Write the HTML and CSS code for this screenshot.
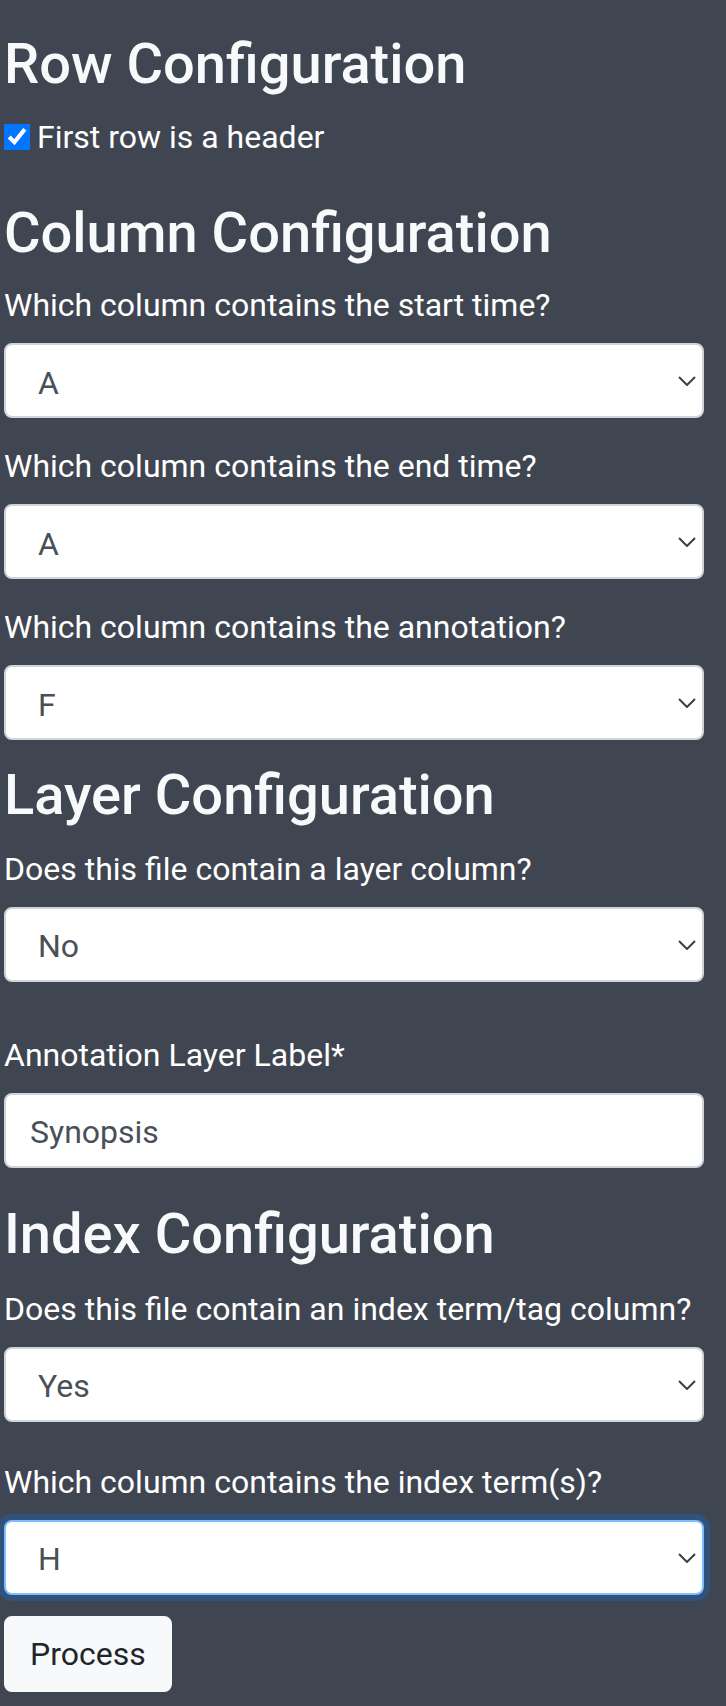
FILE: index.html
```html
<!DOCTYPE html>
<html lang="en">
<head>
<meta charset="utf-8">
<title>Import Configuration</title>
<link rel="stylesheet" href="styles.css">
</head>
<body>
<main class="page">
  <h3 class="section-title section-title--first">Row Configuration</h3>
  <label class="check">
    <input class="check-input" type="checkbox" checked>
    <span>First row is a header</span>
  </label>

  <h3 class="section-title">Column Configuration</h3>
  <div class="field">
    <label class="field-label">Which column contains the start time?</label>
    <div class="select-wrap">
      <select class="select"><option>A</option></select>
      <svg class="chevron" width="18" height="10" viewBox="0 0 18 10"><path d="M1 1 L9 9 L17 1" fill="none" stroke="#3c4043" stroke-width="2"/></svg>
    </div>
  </div>
  <div class="field">
    <label class="field-label">Which column contains the end time?</label>
    <div class="select-wrap">
      <select class="select"><option>A</option></select>
      <svg class="chevron" width="18" height="10" viewBox="0 0 18 10"><path d="M1 1 L9 9 L17 1" fill="none" stroke="#3c4043" stroke-width="2"/></svg>
    </div>
  </div>
  <div class="field field--section-end">
    <label class="field-label">Which column contains the annotation?</label>
    <div class="select-wrap">
      <select class="select"><option>F</option></select>
      <svg class="chevron" width="18" height="10" viewBox="0 0 18 10"><path d="M1 1 L9 9 L17 1" fill="none" stroke="#3c4043" stroke-width="2"/></svg>
    </div>
  </div>

  <h3 class="section-title section-title--layer">Layer Configuration</h3>
  <div class="field field--wide">
    <label class="field-label">Does this file contain a layer column?</label>
    <div class="select-wrap">
      <select class="select"><option>No</option></select>
      <svg class="chevron" width="18" height="10" viewBox="0 0 18 10"><path d="M1 1 L9 9 L17 1" fill="none" stroke="#3c4043" stroke-width="2"/></svg>
    </div>
  </div>
  <div class="field field--before-title">
    <label class="field-label">Annotation Layer Label*</label>
    <input class="text-input" type="text" value="Synopsis">
  </div>

  <h3 class="section-title section-title--index">Index Configuration</h3>
  <div class="field field--index">
    <label class="field-label">Does this file contain an index term/tag column?</label>
    <div class="select-wrap">
      <select class="select"><option>Yes</option></select>
      <svg class="chevron" width="18" height="10" viewBox="0 0 18 10"><path d="M1 1 L9 9 L17 1" fill="none" stroke="#3c4043" stroke-width="2"/></svg>
    </div>
  </div>
  <div class="field field--tight">
    <label class="field-label">Which column contains the index term(s)?</label>
    <div class="select-wrap">
      <select class="select select--focus"><option>H</option></select>
      <svg class="chevron" width="18" height="10" viewBox="0 0 18 10"><path d="M1 1 L9 9 L17 1" fill="none" stroke="#3c4043" stroke-width="2"/></svg>
    </div>
  </div>

  <button class="btn" type="button">Process</button>
</main>
</body>
</html>
```

FILE: styles.css
```css
html, body {
  margin: 0;
  padding: 0;
  background: #3f4651;
}

body {
  font-family: Roboto, "Liberation Sans", Arial, sans-serif;
  color: #ffffff;
}

.page {
  width: 700px;
  padding: 31px 0 0 4px;
  display: flex;
  flex-direction: column;
  align-items: stretch;
}

.section-title {
  margin: 0 0 14px;
  font-size: 56px;
  line-height: 1.2;
  font-weight: 500;
  color: #f8f9fa;
}

.section-title--first {
  margin-bottom: 15px;
}

.section-title--layer {
  margin-bottom: 15px;
}

.section-title--index {
  margin-bottom: 17px;
}

.check {
  display: flex;
  align-items: center;
  gap: 7px;
  font-size: 32px;
  line-height: 48px;
  margin-bottom: 39px;
}

.check-input {
  width: 26px;
  height: 26px;
  margin: 0;
  accent-color: #0075ff;
}

.field {
  display: flex;
  flex-direction: column;
  margin-bottom: 24px;
}

.field--section-end {
  margin-bottom: 22px;
}

.field--wide {
  margin-bottom: 49px;
}

.field--before-title {
  margin-bottom: 33px;
}

.field--index {
  margin-bottom: 36px;
}

.field--tight {
  margin-bottom: 21px;
}

.field-label {
  font-size: 32px;
  line-height: 48px;
  margin-bottom: 14px;
  color: #ffffff;
}

.select-wrap {
  position: relative;
}

.select,
.text-input {
  box-sizing: border-box;
  width: 100%;
  height: 75px;
  margin: 0;
  border: 2px solid #ced4da;
  border-radius: 8px;
  background: #ffffff;
  font-family: Roboto, "Liberation Sans", Arial, sans-serif;
  font-size: 32px;
  color: #495057;
  outline: none;
}

.select {
  appearance: none;
  -webkit-appearance: none;
  padding: 4px 60px 0 32px;
}

.text-input {
  padding: 4px 24px 0;
}

.select--focus {
  border-color: #80bdff;
  box-shadow: 0 0 0 6px rgba(0, 123, 255, 0.25);
}

.chevron {
  position: absolute;
  right: 8px;
  top: 33px;
  pointer-events: none;
}

.btn {
  align-self: flex-start;
  box-sizing: border-box;
  height: 76px;
  padding: 12px 24px;
  border: 2px solid #f8f9fa;
  border-radius: 8px;
  background: #f8f9fa;
  font-family: Roboto, "Liberation Sans", Arial, sans-serif;
  font-size: 32px;
  line-height: 48px;
  color: #212529;
}
```
